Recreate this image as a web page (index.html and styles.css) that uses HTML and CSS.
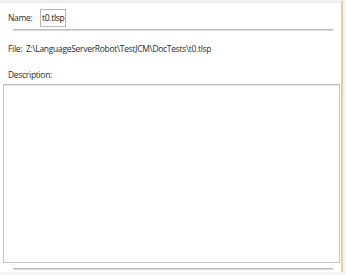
FILE: index.html
```html
<!DOCTYPE html>
<html lang="en">

<head>
    <meta charset="UTF-8" />
    <meta name="viewport" content="width=device-width, initial-scale=1.0" />
    <title>Document</title>
    <link rel="stylesheet" href="styles.css">
</head>

<body>
    <main class="panel">
        <div class="name_row">
            <span class="label">Name:</span>
            <span class="name_box">t0.tlsp</span>
        </div>
        <div class="rule"></div>
        <div class="file_row">File:&nbsp; Z:\LanguageServerRobot\TestJCM\DocTests\t0.tlsp</div>
        <div class="desc_label">Description:</div>
        <div class="desc_box"></div>
        <div class="rule bottom_rule"></div>
    </main>
</body>

</html>
```
FILE: styles.css
```css
html,
body {
    height: 100%;
    padding: 0;
    margin: 0;
}

body {
    background: #f4f4f4;
    font-family: "Open Sans", "Liberation Sans", sans-serif;
    font-size: 8.5px;
    letter-spacing: -0.3px;
    color: #2b2b2b;
}

.panel {
    width: 343px;
    height: 272px;
    box-sizing: border-box;
    background: #fff;
    border-top: 3px solid #eeeeee;
    border-right: 2px solid #e6cf98;
    display: flex;
    flex-direction: column;
}

.name_row {
    height: 23px;
    padding: 3px 0 0 8px;
    display: flex;
    align-items: center;
}

.label {
    width: 32px;
}

.name_box {
    height: 16px;
    padding: 0 1px;
    border: 1px solid #b8b8b8;
    display: flex;
    align-items: center;
    color: #111;
}

.rule {
    margin: 0 8px 0 13px;
    height: 1px;
    border-top: 1px solid #bdbdbd;
    background: #d8d8d8;
}

.file_row {
    height: 12px;
    margin-top: 12px;
    padding-left: 8px;
    white-space: nowrap;
}

.desc_label {
    height: 12px;
    margin-top: 14px;
    padding-left: 8px;
}

.desc_box {
    margin: 3px 1px 0 3px;
    height: 177px;
    border: 1px solid #c4c4c4;
    border-top-color: #c0c0c0;
    box-shadow: inset 0 1px 0 #e4e4e4;
}

.bottom_rule {
    margin-top: 5px;
}
```
